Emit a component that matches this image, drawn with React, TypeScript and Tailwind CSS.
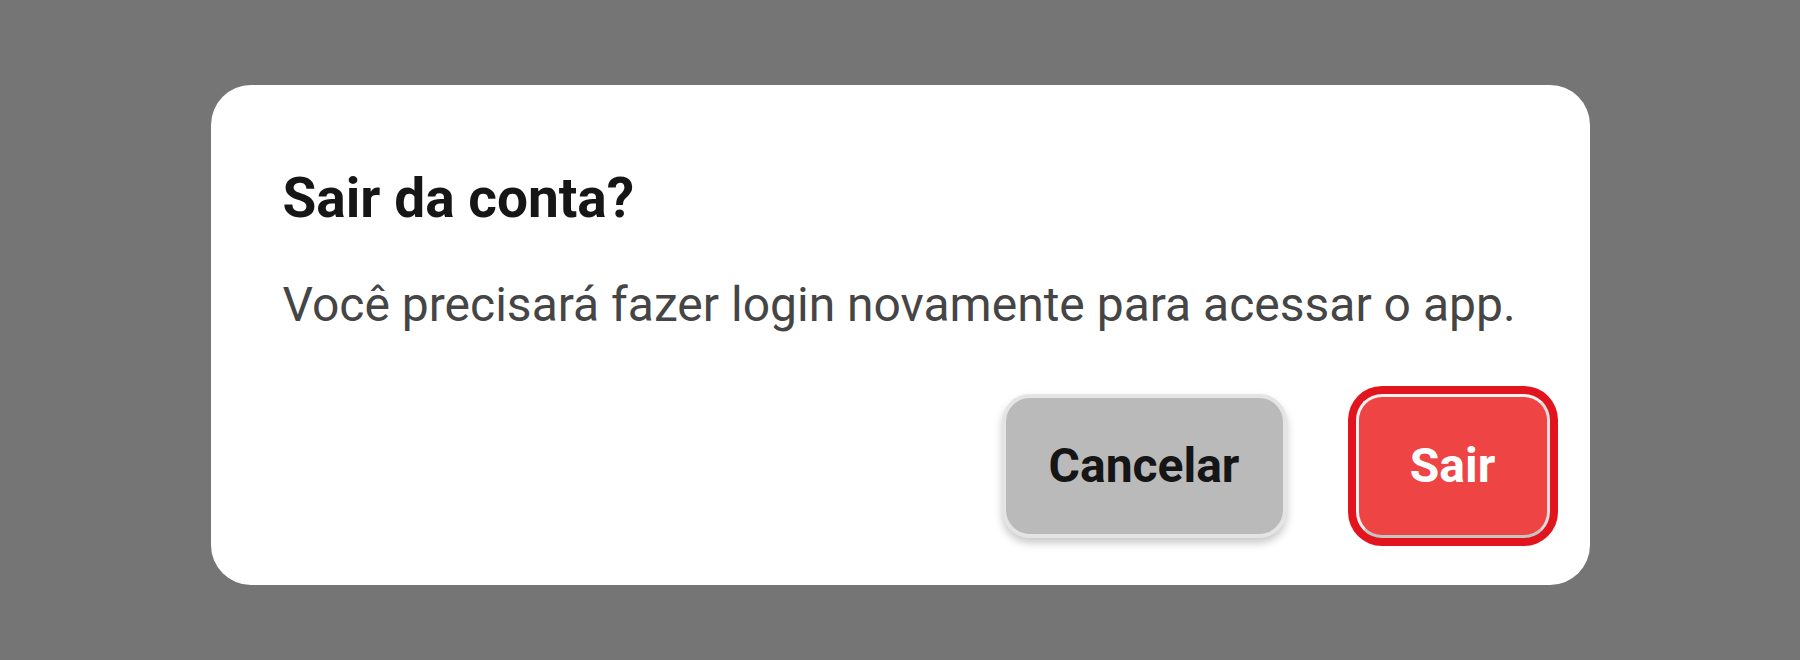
export default function App() {
  return (
    <div className="flex min-h-screen justify-center bg-[#757575] pt-[85px] font-['Roboto',sans-serif]">
      <div
        role="dialog"
        aria-modal="true"
        className="flex h-[500px] w-[1379px] flex-col rounded-[40px] bg-white pb-[47px] pl-[72px] pr-[40px] pt-[80px]"
      >
        <h2 className="text-[55px] font-bold leading-[1.2] text-[#161616]">Sair da conta?</h2>
        <p className="mt-[38px] text-[48px] leading-[1.5] text-[#454545]">
          Você precisará fazer login novamente para acessar o app.
        </p>

        <div className="mt-auto flex items-center justify-end gap-[69px]">
          <button className="h-[144px] w-[285px] rounded-[28px] border-4 border-[#e4e4e4] bg-[#bababa] text-[48px] font-bold text-[#151515] shadow-[0_5px_8px_rgba(0,0,0,0.22)]">
            Cancelar
          </button>
          {/* focused primary action: red focus ring around a light-edged button */}
          <button className="h-[144px] w-[194px] rounded-[26px] border-[3px] border-[#f3f3f3] border-r-[#dcdcdc] border-b-[#c4c4c4] bg-[#ef4444] text-[48px] font-bold text-white ring-8 ring-[#e2141e]">
            Sair
          </button>
        </div>
      </div>
    </div>
  );
}
